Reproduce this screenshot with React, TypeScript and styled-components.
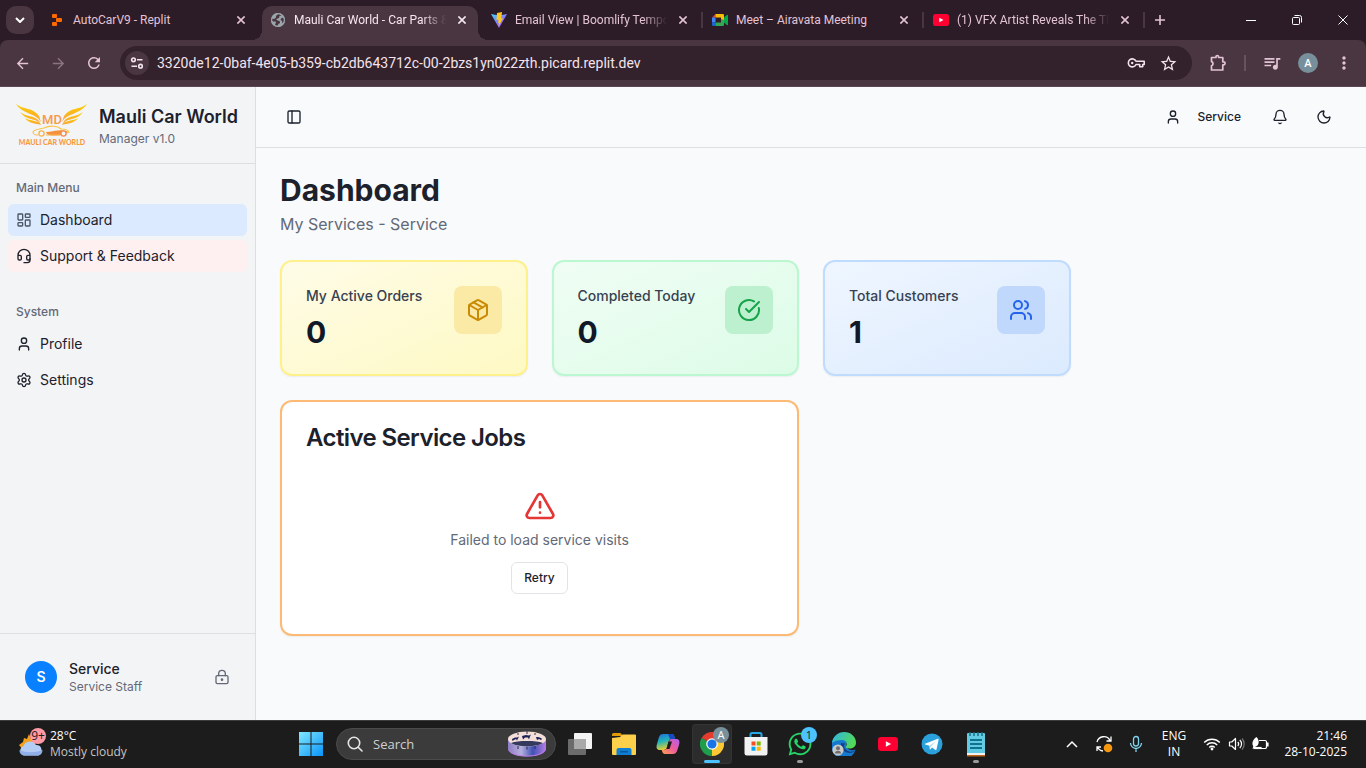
import React from "react";
import styled, { createGlobalStyle, css } from "styled-components";
import {
  Bell,
  CircleCheckBig,
  Headset,
  LayoutDashboard,
  LockKeyhole,
  Moon,
  Package,
  PanelLeft,
  Settings,
  TriangleAlert,
  User,
  Users,
} from "lucide-react";
import {
  MdArrowBack,
  MdArrowForward,
  MdMoreVert,
  MdQueueMusic,
  MdRefresh,
  MdStarBorder,
} from "react-icons/md";
import { FaWhatsapp } from "react-icons/fa";

const strip = "#2c1c27";
const bar = "#4a3640";
const pink = "#e3c3d4";
const ink = "#1c212b";
const muted = "#636976";
const line = "#dddfe3";

const GlobalStyle = createGlobalStyle`
  *, *::before, *::after { box-sizing: border-box; }
  body { margin: 0; font-family: Inter, "Liberation Sans", sans-serif; }
  button { border: 0; padding: 0; background: none; font: inherit; color: inherit; cursor: pointer; }
  input { border: 0; padding: 0; margin: 0; background: none; outline: 0; font: inherit; color: inherit; min-width: 0; }
  h1, h2, p { margin: 0; }
  a { color: inherit; text-decoration: none; }
  svg { display: block; flex: none; }
`;

const Screen = styled.div`
  min-height: 100vh;
  display: flex;
  flex-direction: column;
`;

/* ---------- browser tabs ---------- */

const TabStrip = styled.header`
  height: 40px;
  display: flex;
  align-items: flex-end;
  background: ${strip};
  color: ${pink};
  font-family: Roboto, "Open Sans", sans-serif;
  font-size: 12px;
`;

const TabSearch = styled.button`
  width: 28px;
  height: 28px;
  margin: 0 7px 6px 6px;
  border-radius: 10px;
  background: ${bar};
  color: #fff;
  display: grid;
  place-items: center;
`;

const Tab = styled.div<{ $active?: boolean; $divider?: boolean }>`
  position: relative;
  flex: 0 1 216px;
  min-width: 0;
  height: 34px;
  margin-right: 5px;
  padding: 0 8px 6px 8px;
  display: flex;
  align-items: center;
  gap: 8px;
  ${(p) =>
    p.$active &&
    css`
      background: ${bar};
      color: #f6e6ef;
      border-radius: 10px 10px 0 0;
      &::before,
      &::after {
        content: "";
        position: absolute;
        bottom: 0;
        width: 10px;
        height: 10px;
      }
      &::before {
        left: -10px;
        background: radial-gradient(circle at 0 0, transparent 10px, ${bar} 10px);
      }
      &::after {
        right: -10px;
        background: radial-gradient(circle at 100% 0, transparent 10px, ${bar} 10px);
      }
    `}
  ${(p) =>
    p.$divider &&
    css`
      &::after {
        content: "";
        position: absolute;
        right: -4px;
        top: 6px;
        width: 2px;
        height: 16px;
        background: ${bar};
      }
    `}
`;

const TabTitle = styled.span<{ $fade?: boolean }>`
  flex: 1;
  min-width: 0;
  overflow: hidden;
  white-space: nowrap;
  line-height: 16px;
  ${(p) => p.$fade && css`mask-image: linear-gradient(to right, #000 84%, transparent);`}
`;

const PlainButton = styled.button<{ $w: number }>`
  width: ${(p) => p.$w}px;
  height: 28px;
  display: grid;
  place-items: center;
  flex: none;
`;

const NewTabButton = styled(PlainButton)`
  align-self: center;
`;

const WindowControls = styled.div`
  margin-left: auto;
  align-self: stretch;
  display: flex;
  align-items: center;
  color: #fff;
`;

/* ---------- browser toolbar ---------- */

const ToolbarBack = styled.div`
  background: ${strip};
`;

const Toolbar = styled.div`
  height: 47px;
  display: flex;
  align-items: center;
  padding: 0 4px;
  background: ${bar};
  border-bottom: 1px solid #5b4852;
  border-radius: 8px 8px 0 0;
  color: ${pink};
`;

const Omnibox = styled.label`
  flex: 1;
  height: 34px;
  margin: 0 8px;
  padding: 0 8px 0 5px;
  display: flex;
  align-items: center;
  border-radius: 17px;
  background: #33212c;
  color: #f3e3ec;
`;

const SiteInfo = styled.span`
  width: 24px;
  height: 24px;
  margin-right: 8px;
  border-radius: 50%;
  background: ${bar};
  display: grid;
  place-items: center;
`;

const UrlInput = styled.input`
  flex: 1;
  height: 20px;
  font-family: Roboto, "Open Sans", sans-serif;
  font-size: 14px;
  line-height: 20px;
`;

const ToolDivider = styled.i`
  width: 2px;
  height: 16px;
  margin: 0 8px;
  background: #675360;
`;

const ProfileChip = styled.span`
  width: 20px;
  height: 20px;
  border-radius: 50%;
  display: grid;
  place-items: center;
  background: #78909c;
  color: #fff;
  font-family: Roboto, sans-serif;
  font-size: 11px;
  font-weight: 500;
`;

/* ---------- application ---------- */

const AppShell = styled.div`
  flex: 1;
  display: grid;
  grid-template-columns: 256px 1fr;
  background: #f9fafc;
  color: ${ink};
`;

const Sidebar = styled.aside`
  display: flex;
  flex-direction: column;
  background: #f3f4f6;
  border-right: 1px solid ${line};
`;

const Brand = styled.div`
  height: 77px;
  padding: 0 16px;
  display: flex;
  align-items: center;
  gap: 11px;
  border-bottom: 1px solid ${line};
`;

const BrandName = styled.h2`
  font-size: 18px;
  line-height: 28px;
  font-weight: 600;
  white-space: nowrap;
`;

const Small = styled.p`
  font-size: 12px;
  line-height: 16px;
  color: ${muted};
`;

const Menu = styled.nav`
  flex: 1;
  display: flex;
  flex-direction: column;
  gap: 8px;
`;

const MenuGroup = styled.div`
  padding: 8px;
`;

const MenuLabel = styled.div`
  height: 32px;
  padding: 0 8px;
  display: flex;
  align-items: center;
  font-size: 12px;
  line-height: 16px;
  font-weight: 500;
  color: ${muted};
`;

const MenuList = styled.div`
  display: flex;
  flex-direction: column;
  gap: 4px;
`;

const MenuLink = styled.a<{ $bg?: string }>`
  height: 32px;
  padding: 0 8px;
  display: flex;
  align-items: center;
  gap: 8px;
  border-radius: 6px;
  font-size: 14px;
  line-height: 20px;
  background: ${(p) => p.$bg ?? "transparent"};
`;

const SidebarFooter = styled.div`
  padding: 24px;
  border-top: 1px solid ${line};
`;

const Account = styled.div`
  padding: 1px;
  display: flex;
  align-items: center;
  gap: 12px;
`;

const AccountAvatar = styled.span`
  width: 32px;
  height: 32px;
  border-radius: 50%;
  display: grid;
  place-items: center;
  background: #0880ff;
  color: #fff;
  font-size: 14px;
  line-height: 20px;
  font-weight: 600;
`;

const AccountText = styled.div`
  flex: 1;
`;

const AccountName = styled.p`
  font-size: 14px;
  line-height: 20px;
  font-weight: 500;
`;

const Main = styled.main`
  min-width: 0;
`;

const TopBar = styled.div`
  height: 61px;
  padding: 0 24px;
  display: flex;
  align-items: center;
  gap: 8px;
  border-bottom: 1px solid ${line};
`;

const SquareButton = styled.button<{ $size: number }>`
  width: ${(p) => p.$size}px;
  height: ${(p) => p.$size}px;
  display: grid;
  place-items: center;
`;

const UserButton = styled.button`
  height: 36px;
  margin-left: auto;
  padding: 0 13px;
  display: flex;
  align-items: center;
  gap: 16px;
  font-size: 12px;
  line-height: 16px;
  font-weight: 500;
`;

const Content = styled.div`
  padding: 24px;
`;

const PageTitle = styled.h1`
  font-size: 30px;
  line-height: 36px;
  font-weight: 700;
`;

const PageSubtitle = styled.p`
  margin: 4px 0 24px;
  font-size: 16px;
  line-height: 24px;
  color: ${muted};
`;

const CardGrid = styled.div`
  display: grid;
  grid-template-columns: repeat(4, 1fr);
  gap: 24px;
`;

const StatCard = styled.section<{ $border: string; $from: string; $to: string }>`
  padding: 24px;
  display: flex;
  justify-content: space-between;
  align-items: flex-start;
  border: 2px solid ${(p) => p.$border};
  border-radius: 12px;
  background: linear-gradient(to bottom right, ${(p) => p.$from}, ${(p) => p.$to}) border-box;
  box-shadow: 0 1px 2px rgba(0, 0, 0, 0.06);
`;

const StatLabel = styled.p`
  font-size: 14px;
  line-height: 20px;
  font-weight: 500;
  color: #374151;
`;

const StatValue = styled.p`
  margin-top: 8px;
  font-size: 30px;
  line-height: 36px;
  font-weight: 700;
  color: #111827;
`;

const StatIcon = styled.span<{ $bg: string; $fg: string }>`
  width: 48px;
  height: 48px;
  border-radius: 8px;
  display: grid;
  place-items: center;
  background: ${(p) => p.$bg};
  color: ${(p) => p.$fg};
`;

const JobsCard = styled.section`
  grid-column: span 2;
  padding: 24px;
  border: 2px solid #fdba74;
  border-radius: 12px;
  background: #fff;
  box-shadow: 0 1px 2px rgba(0, 0, 0, 0.06);
`;

const JobsTitle = styled.h2`
  font-size: 24px;
  line-height: 24px;
  font-weight: 600;
  letter-spacing: -0.025em;
`;

const JobsError = styled.div`
  margin-top: 24px;
  padding: 16px 0;
  display: flex;
  flex-direction: column;
  align-items: center;
  color: #e53535;
`;

const JobsMessage = styled.p`
  margin: 8px 0 12px;
  font-size: 14px;
  line-height: 20px;
  color: ${muted};
`;

const RetryButton = styled.button`
  height: 32px;
  padding: 0 12px;
  border: 1px solid #e2e4e7;
  border-radius: 6px;
  font-size: 12px;
  line-height: 16px;
  font-weight: 500;
  color: ${ink};
`;

/* ---------- taskbar ---------- */

const Taskbar = styled.footer`
  height: 48px;
  display: grid;
  grid-template-columns: 289px 1fr auto;
  align-items: center;
  background: #1c1c1c;
  box-shadow: inset 0 1px 0 #3d3d3f;
  color: #fff;
  font-family: "Open Sans", "Noto Sans", sans-serif;
  font-size: 12px;
  line-height: 16px;
`;

const Weather = styled.div`
  padding-left: 16px;
  display: flex;
  align-items: center;
  gap: 4px;
`;

const WeatherNote = styled.div`
  color: #c4c4c4;
`;

const Apps = styled.div`
  display: flex;
  align-items: center;
`;

const AppButton = styled.button<{ $open?: boolean; $focused?: boolean }>`
  position: relative;
  width: 40px;
  height: 40px;
  margin: 0 2px;
  display: grid;
  place-items: center;
  border-radius: 4px;
  ${(p) => p.$focused && css`background: #2c2c2c; box-shadow: inset 0 0 0 1px #343434;`}
  ${(p) =>
    (p.$open || p.$focused) &&
    css`
      &::after {
        content: "";
        position: absolute;
        bottom: 1px;
        width: ${p.$focused ? 16 : 6}px;
        height: 3px;
        border-radius: 2px;
        background: ${p.$focused ? "#4cc2ff" : "#9a9a9a"};
      }
    `}
`;

const AppBadge = styled.span<{ $bg: string; $fg: string }>`
  position: absolute;
  top: 3px;
  right: 3px;
  width: 16px;
  height: 16px;
  border-radius: 50%;
  display: grid;
  place-items: center;
  background: ${(p) => p.$bg};
  color: ${(p) => p.$fg};
  font-size: 11px;
`;

const SearchBox = styled.label`
  width: 220px;
  height: 32px;
  margin: 0 2px 0 3px;
  padding: 0 9px 0 10px;
  display: flex;
  align-items: center;
  gap: 10px;
  border-radius: 16px;
  background: #3b3b3b;
  border: 1px solid #4a4a4a;
`;

const SearchInput = styled.input`
  flex: 1;
  font-size: 13px;
  line-height: 20px;
  &::placeholder {
    color: #d0d0d0;
    opacity: 1;
  }
`;

const Tray = styled.div`
  display: flex;
  align-items: center;
  padding-right: 19px;
`;

const TraySlot = styled.button<{ $w: number }>`
  width: ${(p) => p.$w}px;
  height: 32px;
  display: grid;
  place-items: center;
  text-align: center;
`;

const Clock = styled.div`
  width: 71px;
  display: flex;
  flex-direction: column;
  align-items: flex-end;
  white-space: nowrap;
`;

/* ---------- drawings ---------- */

const Cross = ({ size = 8, w = 2 }: { size?: number; w?: number }) => (
  <svg width={size} height={size} viewBox="0 0 10 10" stroke="currentColor" strokeWidth={w}>
    <path d="M.5.5l9 9M9.5.5l-9 9" />
  </svg>
);

const ReplitMark = () => (
  <svg width="16" height="16" viewBox="0 0 16 16" fill="#ff6a00">
    <rect x="3" y="2" width="5" height="4" rx="1" />
    <rect x="7" y="6" width="6" height="4" rx="1" />
    <rect x="3" y="10" width="5" height="4" rx="1" />
  </svg>
);

const GlobeMark = () => (
  <svg width="16" height="16" viewBox="0 0 16 16">
    <circle cx="8" cy="8" r="7" fill="#9aa5ab" />
    <path d="M8.500 1.500L6 4v1.500L4 7 1.500 6.500 1 8l2 1.500h2.500L6 11l-1 1 .5 2.500h1.500L8.500 12 10 11V9.500L8 8.500 6.500 8V7L9 6l.5-2L12 3.200z" fill={bar} />
    <path d="M11 6.500L13 5.500l1.500 2-.5 3-1.500 1L12 9l-1.500-1z" fill={bar} />
    <circle cx="8" cy="8" r="6.400" fill="none" stroke="#9aa5ab" strokeWidth="1.200" />
  </svg>
);

const ViteMark = () => (
  <svg width="16" height="16" viewBox="0 0 16 16">
    <defs>
      <linearGradient id="vite" x1="0" y1="0" x2="1" y2="1">
        <stop offset="0" stopColor="#41d1ff" />
        <stop offset="1" stopColor="#bd34fe" />
      </linearGradient>
    </defs>
    <path d="M0 2l8 14 8-14-8 1.5z" fill="url(#vite)" />
    <path d="M11 0L6 1l-.5 7 2-.4L7 11l1-.3-.5 4L12 6l-2.200.4.800-3z" fill="#ffc81e" />
  </svg>
);

const MeetMark = () => (
  <svg width="16" height="16" viewBox="0 0 16 16">
    <path d="M0 5.500L3.500 2v3.500z" fill="#ea4335" />
    <path d="M0 5.500h3.500v5H0z" fill="#4285f4" />
    <path d="M0 10.500h3.500V14H1.200A1.200 1.200 0 010 12.800z" fill="#1967d2" />
    <path d="M3.500 2h7.300A1.200 1.200 0 0112 3.200V8L9 7.500v-2H3.500z" fill="#fbbc04" />
    <path d="M3.500 14v-3.500H9V8h3v4.800a1.200 1.200 0 01-1.200 1.200z" fill="#34a853" />
    <path d="M12 5.500L14.800 3c.5-.4 1.200-.1 1.200.5v9c0 .6-.7.900-1.200.5L12 10.500z" fill="#00ac47" />
  </svg>
);

const YoutubeMark = ({ w = 16, h = 12 }: { w?: number; h?: number }) => (
  <svg width={w} height={h} viewBox="0 0 16 12" preserveAspectRatio="none">
    <rect width="16" height="12" rx="2.500" fill="#ff0033" />
    <path d="M6.300 3.700v4.600L10.500 6z" fill="#fff" />
  </svg>
);

const TuneIcon = () => (
  <svg width="14" height="14" viewBox="0 0 14 14" fill="none" stroke="currentColor" strokeWidth="1.600">
    <circle cx="3.500" cy="3.800" r="1.800" />
    <path d="M7 3.800h5.500M1.500 10.200H7" />
    <circle cx="10.500" cy="10.200" r="1.800" />
  </svg>
);

const KeyIcon = () => (
  <svg width="18" height="12" viewBox="0 0 18 12" fill="none" stroke="currentColor" strokeWidth="1.600">
    <path d="M9 4.300h8.200v3.200h-1.500v2.300h-3V7.500H9A4 4 0 119 4.300z" strokeLinejoin="round" />
    <circle cx="5.200" cy="6" r="1.200" fill="currentColor" stroke="none" />
  </svg>
);

const PuzzleIcon = () => (
  <svg width="18" height="18" viewBox="0 0 18 18" fill="none" stroke="currentColor" strokeWidth="1.700" strokeLinejoin="round">
    <path d="M2.500 3.500H7V2.800a1.300 1.300 0 012.600 0v.7h4.200v4.300h.8a1.500 1.500 0 010 3h-.8v5.200H2.500v-4.200a2.200 2.200 0 000-4.200z" />
  </svg>
);

const CarLogo = () => (
  <svg width="72" height="44" viewBox="0 0 72 44" role="img">
    <defs>
      <linearGradient id="gold" x1="0" y1="0" x2="0" y2="1">
        <stop offset="0" stopColor="#fdd000" />
        <stop offset="1" stopColor="#f9a03c" />
      </linearGradient>
    </defs>
    <g fill="url(#gold)">
      <path d="M0 1C7 7 17 4 23 13l2 6C20 10 6 11 0 1z" />
      <path d="M4 9c6 5 14 3 19 9l1 2C19 15 9 17 4 9z" />
      <path d="M9 15c5 3 10 2 15 5l1 2C19 20 13 21 9 15z" />
    </g>
    <g fill="url(#gold)" transform="translate(71 0) scale(-1 1)">
      <path d="M0 1C7 7 17 4 23 13l2 6C20 10 6 11 0 1z" />
      <path d="M4 9c6 5 14 3 19 9l1 2C19 15 9 17 4 9z" />
      <path d="M9 15c5 3 10 2 15 5l1 2C19 20 13 21 9 15z" />
    </g>
    <text x="36" y="21" textAnchor="middle" fontFamily="Roboto, sans-serif" fontWeight="500" fontSize="13" fill="#f79a4a">MD</text>
    <path d="M17 29c1-3 8-3 11-4 6-3 14-2 17 1 4 0 8 1 8 4" fill="none" stroke="#f8c548" strokeWidth="1.200" />
    <path d="M30 29c7 0 13-3 20-1l2 1c-2 3-16 5-21 2z" fill="#f5913d" />
    <path d="M17 29c0 3 3 3 5 3M30 32h14" fill="none" stroke="#f8b54c" />
    <circle cx="25.500" cy="30.500" r="2.600" fill="none" stroke="#f8b54c" strokeWidth="1.400" />
    <circle cx="47.500" cy="30.500" r="2.600" fill="#f3f4f6" stroke="#f28c50" strokeWidth="1.400" />
    <text x="36" y="42" textAnchor="middle" fontFamily="Lato, sans-serif" fontWeight="900" fontSize="7" fill="#f79a3e">MAULI CAR WORLD</text>
  </svg>
);

const WeatherIcon = () => (
  <svg width="30" height="32" viewBox="0 0 30 32">
    <path d="M13 6l2 5 5 3-4 9-9-1-4-5 4-3 1-4 3 1z" fill="#f6a11c" />
    <path d="M8 27.500a5 5 0 01-.5-9.500 7 7 0 0112.500-1 5.400 5.400 0 012 10.500z" fill="#b4cdf5" />
    <path d="M8 27.500a5 5 0 01-4.500-5.500c6 3 16 3 23 0 0 3-2 5.500-4.500 5.500z" fill="#8fb0e8" />
    <circle cx="22" cy="8" r="8" fill="#ff99a4" />
    <text x="22" y="12" textAnchor="middle" fontSize="12" fill="#1c1c1c">9+</text>
  </svg>
);

const StartIcon = () => (
  <svg width="24" height="24" viewBox="0 0 24 24">
    <defs>
      <linearGradient id="start" gradientUnits="userSpaceOnUse" x1="0" y1="0" x2="24" y2="24">
        <stop offset="0" stopColor="#80e8ff" />
        <stop offset="1" stopColor="#0a94f8" />
      </linearGradient>
    </defs>
    <path d="M0 0h11.500v11.500H0zM12.500 0H24v11.500H12.500zM0 12.500h11.500V24H0zM12.500 12.500H24V24H12.500z" fill="url(#start)" />
  </svg>
);

const LensIcon = () => (
  <svg width="16" height="16" viewBox="0 0 16 16" fill="none" stroke="#e6e6e6" strokeWidth="1.600" strokeLinecap="round">
    <circle cx="7" cy="7" r="5.700" />
    <path d="M11.200 11.200L15 15" />
  </svg>
);

const DrumArt = () => (
  <svg width="38" height="26" viewBox="0 0 38 26">
    <defs>
      <linearGradient id="drum" x1="0" y1="0" x2="1" y2="0">
        <stop offset="0" stopColor="#8f7dc4" />
        <stop offset=".35" stopColor="#b5b0dd" />
        <stop offset=".65" stopColor="#3f52b4" />
        <stop offset="1" stopColor="#b77be6" />
      </linearGradient>
    </defs>
    <path d="M0 8v10c0 4 8 7.500 19 7.500S38 22 38 18V8z" fill="url(#drum)" />
    <path d="M1 19c2 4 9 6 18 6s16-2 18-6" fill="none" stroke="#c07be8" />
    <ellipse cx="19" cy="8" rx="19" ry="7.500" fill="#f4dfd8" />
    <path d="M3 12c4-1.500 9-2 16-2s12 .5 16 2c-3 2-9 3.200-16 3.200S6 14 3 12z" fill="#34395e" />
    <g fill="#1d1f57">
      <path d="M14 5l4-1 3 .5 2-1-1 2-1 3-1-2h-3l-2 2z" />
      <path d="M4 8l3-1.500 2 0 2-1-1 2-1 2-1-1.500-2 1-1.500 1z" />
      <path d="M28 6l2 0 3 1 1 1-1 1-2-1-2 1z" />
    </g>
    <path d="M10 2v2M19 0v3M27 2v2M10 15v3M19 15.500v3M27 15v3" stroke="#2b2a52" />
  </svg>
);

const TaskViewIcon = () => (
  <svg width="24" height="24" viewBox="0 0 24 24">
    <rect x="6" y="1" width="18" height="16" rx="1" fill="#f3f3f3" />
    <rect x="0" y="7" width="18" height="16" rx="1" fill="#6b6b6b" />
    <rect x="6" y="7" width="12" height="10" fill="#a9a9a9" />
  </svg>
);

const FolderIcon = () => (
  <svg width="24" height="22" viewBox="0 0 24 22">
    <path d="M0 1.500A1.500 1.500 0 011.500 0h7L11 3H0z" fill="#e09a06" />
    <path d="M0 5l8-1 2.500-2.500H23a1 1 0 011 1V21a1 1 0 01-1 1H1a1 1 0 01-1-1z" fill="#fdd04b" />
    <path d="M4.500 22v-5a2 2 0 012-2h11a2 2 0 012 2v5z" fill="#0f7fd4" />
    <rect x="8" y="18" width="8" height="1.500" rx=".7" fill="#0a579c" />
  </svg>
);

const CopilotIcon = () => (
  <svg width="24" height="24" viewBox="0 0 24 24">
    <defs>
      <linearGradient id="copA" x1="0" y1="0" x2=".3" y2="1">
        <stop offset="0" stopColor="#1d6fe0" />
        <stop offset=".5" stopColor="#22b4b8" />
        <stop offset="1" stopColor="#e8cf2e" />
      </linearGradient>
      <linearGradient id="copB" x1="1" y1="0" x2="0" y2="1">
        <stop offset="0" stopColor="#b060f0" />
        <stop offset=".5" stopColor="#ee5c9c" />
        <stop offset="1" stopColor="#ffa24c" />
      </linearGradient>
    </defs>
    <path d="M7 2h9c1.500 0 2 1 2.500 3l.5 2h-4c-1.500 0-2 1-2.500 3L11 15c-.7 2-1.500 3-3.500 3H4c-3.500 0-4-2.500-3-6l2-7c.8-2 2-3 4-3z" fill="url(#copA)" />
    <path d="M17 22H9c-1.500 0-2.500-1-3-3l-.3-1H8c2 0 2.500-1 3-3L13 9.500C13.500 7.500 14.500 7 16 7h4c3.500 0 4 2.500 3 6l-2 6c-.8 2-2 3-4 3z" fill="url(#copB)" />
    <path d="M12.500 9.500h3.500l-2.500 7.500H10.500z" fill="#1c1c1c" />
    <path d="M12 2h4c1.500 0 2 1 2.500 3l.5 2h-5z" fill="#1848c0" />
  </svg>
);

const ChromeIcon = () => (
  <svg width="24" height="24" viewBox="0 0 24 24">
    <path d="M12 12L1.600 6A12 12 0 0122.400 6z" fill="#e33b2e" />
    <path d="M12 12L22.400 6A12 12 0 0112 24z" fill="#fcc934" />
    <path d="M12 12v12A12 12 0 011.600 6z" fill="#1e9e4c" />
    <path d="M12 6.500h10.600L12 12z" fill="#e33b2e" />
    <path d="M17 14.800L12 24V12z" fill="#fcc934" />
    <circle cx="12" cy="12" r="5.800" fill="#fff" />
    <circle cx="12" cy="12" r="4.600" fill="#1a73e8" />
  </svg>
);

const StoreIcon = () => (
  <svg width="24" height="24" viewBox="0 0 24 24">
    <path d="M6.500 6V2.500A1.500 1.500 0 018 1h8a1.500 1.500 0 011.500 1.500V6" fill="none" stroke="#27a7e8" strokeWidth="2" />
    <path d="M.5 5h23v16a2.500 2.500 0 01-2.500 2.500H3A2.500 2.500 0 01.5 21z" fill="#f2f2f2" />
    <path d="M7.500 9.500h4v4h-4z" fill="#f25022" />
    <path d="M12.700 9.500h4v4h-4z" fill="#7fba00" />
    <path d="M7.500 14.700h4v4h-4z" fill="#00a4ef" />
    <path d="M12.700 14.700h4v4h-4z" fill="#ffb900" />
  </svg>
);

const EdgeIcon = () => (
  <svg width="24" height="24" viewBox="0 0 24 24">
    <defs>
      <linearGradient id="edgeTop" x1="0" y1="0" x2="1" y2=".4">
        <stop offset="0" stopColor="#2fb4ea" />
        <stop offset="1" stopColor="#52d859" />
      </linearGradient>
    </defs>
    <path d="M0 12C0 5 5 2 11 5c5 1 4 6 3 8 1 5 5 6 9.500 4.500A12 12 0 110 12z" fill="#1579cf" />
    <path d="M0 11C1 4 6 0 12 0c7 0 12 5 12 10.500 0 4-3 6-6.500 6-3 0-4-1-3.500-2 2-3 0-6.500-4-6.500C6 8 2 9 0 11z" fill="url(#edgeTop)" />
    <path d="M9 11c-1 6 4 10 9 10 2 0 4-1 5-2.500-3 1.500-5 1.500-7 .5-4-2-5-5-3-7.500z" fill="#123f86" />
    <circle cx="6" cy="18" r="5.600" fill="#c9c9c9" />
    <circle cx="6" cy="16.300" r="2" fill="#6e6e6e" />
    <path d="M2.700 21.500c.5-2 1.800-2.700 3.300-2.700s2.800.7 3.300 2.700z" fill="#6e6e6e" />
  </svg>
);

const TelegramIcon = () => (
  <svg width="22" height="22" viewBox="0 0 22 22">
    <circle cx="11" cy="11" r="10.500" fill="#2aa1dc" />
    <path d="M4 10.800L16.800 5.800c.6-.2 1 .1.800.9l-2.100 9.800c-.2.700-.6.800-1.100.5l-3.300-2.400-1.600 1.600c-.4.400-.8.200-.8-.3l-.2-3.200-4.300-1.300c-.6-.2-.6-.5-.2-.6z" fill="#fff" />
    <path d="M8.700 12.600l6-4.200-4.400 5-.5 2.200z" fill="#b9dcf0" />
  </svg>
);

const NotepadIcon = () => (
  <svg width="20" height="26" viewBox="0 0 20 26">
    <rect x="1" y="2" width="18" height="22" rx="1" fill="#62cbe4" />
    <path d="M4 5V1M8 5V1M12 5V1M16 5V1" stroke="#1d6d86" strokeWidth="1.500" />
    <path d="M4 9h12M4 13h12M4 17h12" stroke="#12718f" strokeWidth="1.800" />
    <path d="M1 22h18v2H1z" fill="#f1f1f1" />
    <path d="M1 24h18v1.500H1z" fill="#c0661c" />
  </svg>
);

const SyncIcon = () => (
  <svg width="18" height="18" viewBox="0 0 18 18" fill="none" stroke="#fff" strokeWidth="1.300">
    <path d="M2 7A7 7 0 0115 5.500M16 1.500v4.500h-4.500M2 16v-4h4M2.500 12A7 7 0 008 16" />
    <circle cx="13" cy="13" r="4.300" fill="#f7960f" stroke="none" />
  </svg>
);

const MicIcon = () => (
  <svg width="14" height="18" viewBox="0 0 14 18" fill="none" stroke="#7fd4ee" strokeWidth="1.300">
    <rect x="4.500" y="1.500" width="5" height="9.500" rx="2.500" />
    <path d="M1.500 8a5.500 5.500 0 0011 0M7 13.500V17" />
  </svg>
);

const WifiIcon = () => (
  <svg width="18" height="14" viewBox="0 0 18 14" fill="none" stroke="#fff" strokeWidth="1.400">
    <path d="M1.200 5.500a11 11 0 0115.600 0M3.800 8a7.300 7.300 0 0110.400 0M6.300 10.400a3.800 3.800 0 015.400 0" />
    <circle cx="9" cy="12" r="1.400" fill="#fff" stroke="none" />
  </svg>
);

const VolumeIcon = () => (
  <svg width="18" height="14" viewBox="0 0 18 14" fill="none" stroke="#fff" strokeWidth="1.200">
    <path d="M1.500 5h2.300L7.500 1.500v11L3.800 9H1.500z" strokeLinejoin="round" />
    <path d="M9.800 5a3 3 0 010 4M11.800 3a5.500 5.500 0 010 8" />
    <path d="M14 1.500a8 8 0 010 11" stroke="#777" />
  </svg>
);

const BatteryIcon = () => (
  <svg width="18" height="14" viewBox="0 0 18 14" fill="none" stroke="#fff" strokeWidth="1.200">
    <path d="M8 3.500h6A1.500 1.500 0 0115.500 5v5a1.500 1.500 0 01-1.500 1.500H3.500" />
    <path d="M15.500 6H17v3h-1.500" fill="#fff" />
    <path d="M3 10.500h7v1H3z" fill="#fff" />
    <path d="M5.500 0C8 2.500 8.500 6 6.500 8.500L4 10 1.500 12l.8-3C.5 7 1.500 2.500 5.500 0z" fill="#fff" stroke="none" />
  </svg>
);

/* ---------- data ---------- */

const tabs = [
  { title: "AutoCarV9 - Replit", icon: <ReplitMark /> },
  { title: "Mauli Car World - Car Parts &", icon: <GlobeMark />, active: true, fade: true },
  { title: "Email View | Boomlify Tempo", icon: <ViteMark />, divider: true, fade: true },
  { title: "Meet – Airavata Meeting", icon: <MeetMark />, divider: true },
  { title: "(1) VFX Artist Reveals The TR", icon: <YoutubeMark />, divider: true, fade: true },
];

const stats = [
  { label: "My Active Orders", value: 0, Icon: Package, border: "#fef08a", from: "#fefce8", to: "#fef9c3", bg: "#fbeaa6", fg: "#ca8a04" },
  { label: "Completed Today", value: 0, Icon: CircleCheckBig, border: "#bbf7d0", from: "#f0fdf4", to: "#dcfce7", bg: "#bdf0cf", fg: "#16a34a" },
  { label: "Total Customers", value: 1, Icon: Users, border: "#bfdbfe", from: "#eff6ff", to: "#dbeafe", bg: "#c0d8fc", fg: "#2563eb" },
];

export default function App() {
  return (
    <Screen>
      <GlobalStyle />
      <TabStrip>
        <TabSearch aria-label="Search tabs">
          <svg width="10" height="6" viewBox="0 0 10 6" fill="none" stroke="currentColor" strokeWidth="2">
            <path d="M1 1l4 4 4-4" />
          </svg>
        </TabSearch>
        {tabs.map((t) => (
          <Tab key={t.title} $active={t.active} $divider={t.divider}>
            {t.icon}
            <TabTitle $fade={t.fade}>{t.title}</TabTitle>
            <PlainButton $w={16} aria-label="Close tab">
              <Cross />
            </PlainButton>
          </Tab>
        ))}
        <NewTabButton $w={28} aria-label="New tab">
          <svg width="10" height="10" viewBox="0 0 10 10" stroke="currentColor" strokeWidth="1.600">
            <path d="M5 0v10M0 5h10" />
          </svg>
        </NewTabButton>
        <WindowControls>
          <PlainButton $w={46} aria-label="Minimize">
            <svg width="10" height="1" viewBox="0 0 10 1"><path d="M0 0h10v1H0z" fill="currentColor" /></svg>
          </PlainButton>
          <PlainButton $w={46} aria-label="Restore">
            <svg width="10" height="10" viewBox="0 0 10 10" fill="none" stroke="currentColor">
              <rect x=".5" y="2.500" width="7" height="7" rx="1" />
              <path d="M2.500.5h5a2 2 0 012 2v5" />
            </svg>
          </PlainButton>
          <PlainButton $w={46} aria-label="Close"><Cross size={10} w={1} /></PlainButton>
        </WindowControls>
      </TabStrip>
      <ToolbarBack>
        <Toolbar>
          <PlainButton $w={36} aria-label="Back"><MdArrowBack size={17} /></PlainButton>
          <PlainButton $w={36} aria-label="Forward"><MdArrowForward size={17} color="#8a7480" /></PlainButton>
          <PlainButton $w={36} aria-label="Reload"><MdRefresh size={18} /></PlainButton>
          <Omnibox>
            <SiteInfo><TuneIcon /></SiteInfo>
            <UrlInput aria-label="Address" defaultValue="3320de12-0baf-4e05-b359-cb2db643712c-00-2bzs1yn022zth.picard.replit.dev" />
            <PlainButton $w={32} aria-label="Passwords"><KeyIcon /></PlainButton>
            <PlainButton $w={32} aria-label="Bookmark"><MdStarBorder size={19} /></PlainButton>
          </Omnibox>
          <PlainButton $w={36} aria-label="Extensions"><PuzzleIcon /></PlainButton>
          <ToolDivider />
          <PlainButton $w={36} aria-label="Media"><MdQueueMusic size={20} /></PlainButton>
          <PlainButton $w={36} aria-label="Profile"><ProfileChip>A</ProfileChip></PlainButton>
          <PlainButton $w={36} aria-label="Menu"><MdMoreVert size={20} /></PlainButton>
        </Toolbar>
      </ToolbarBack>

      <AppShell>
        <Sidebar>
          <Brand>
            <CarLogo />
            <div>
              <BrandName>Mauli Car World</BrandName>
              <Small>Manager v1.0</Small>
            </div>
          </Brand>
          <Menu>
            <MenuGroup>
              <MenuLabel>Main Menu</MenuLabel>
              <MenuList>
                <MenuLink href="#dashboard" $bg="#dbeafe"><LayoutDashboard size={16} color="#4b5563" />Dashboard</MenuLink>
                <MenuLink href="#support" $bg="#fef0f0"><Headset size={16} />Support &amp; Feedback</MenuLink>
              </MenuList>
            </MenuGroup>
            <MenuGroup>
              <MenuLabel>System</MenuLabel>
              <MenuList>
                <MenuLink href="#profile"><User size={16} />Profile</MenuLink>
                <MenuLink href="#settings"><Settings size={16} />Settings</MenuLink>
              </MenuList>
            </MenuGroup>
          </Menu>
          <SidebarFooter>
            <Account>
              <AccountAvatar>S</AccountAvatar>
              <AccountText>
                <AccountName>Service</AccountName>
                <Small>Service Staff</Small>
              </AccountText>
              <button aria-label="Lock"><LockKeyhole size={16} color={muted} /></button>
            </Account>
          </SidebarFooter>
        </Sidebar>

        <Main>
          <TopBar>
            <SquareButton $size={28} aria-label="Toggle sidebar"><PanelLeft size={16} /></SquareButton>
            <UserButton><User size={16} />Service</UserButton>
            <SquareButton $size={36} aria-label="Notifications"><Bell size={16} /></SquareButton>
            <SquareButton $size={36} aria-label="Dark mode"><Moon size={16} /></SquareButton>
          </TopBar>
          <Content>
            <PageTitle>Dashboard</PageTitle>
            <PageSubtitle>My Services - Service</PageSubtitle>
            <CardGrid>
              {stats.map((s) => (
                <StatCard key={s.label} $border={s.border} $from={s.from} $to={s.to}>
                  <div>
                    <StatLabel>{s.label}</StatLabel>
                    <StatValue>{s.value}</StatValue>
                  </div>
                  <StatIcon $bg={s.bg} $fg={s.fg}><s.Icon size={24} /></StatIcon>
                </StatCard>
              ))}
              <JobsCard>
                <JobsTitle>Active Service Jobs</JobsTitle>
                <JobsError>
                  <TriangleAlert size={32} />
                  <JobsMessage>Failed to load service visits</JobsMessage>
                  <RetryButton>Retry</RetryButton>
                </JobsError>
              </JobsCard>
            </CardGrid>
          </Content>
        </Main>
      </AppShell>

      <Taskbar>
        <Weather>
          <WeatherIcon />
          <div>
            <div>28°C</div>
            <WeatherNote>Mostly cloudy</WeatherNote>
          </div>
        </Weather>
        <Apps>
          <AppButton aria-label="Start"><StartIcon /></AppButton>
          <SearchBox>
            <LensIcon />
            <SearchInput aria-label="Search" placeholder="Search" />
            <DrumArt />
          </SearchBox>
          <AppButton aria-label="Task view"><TaskViewIcon /></AppButton>
          <AppButton aria-label="Files"><FolderIcon /></AppButton>
          <AppButton aria-label="Copilot"><CopilotIcon /></AppButton>
          <AppButton $focused aria-label="Chrome"><ChromeIcon /><AppBadge $bg="#78909c" $fg="#fff">A</AppBadge></AppButton>
          <AppButton aria-label="Store"><StoreIcon /></AppButton>
          <AppButton $open aria-label="WhatsApp"><FaWhatsapp size={26} color="#25d366" /><AppBadge $bg="#4cc2ff" $fg="#1c1c1c">1</AppBadge></AppButton>
          <AppButton aria-label="Edge"><EdgeIcon /></AppButton>
          <AppButton aria-label="YouTube"><YoutubeMark w={20} h={14} /></AppButton>
          <AppButton aria-label="Telegram"><TelegramIcon /></AppButton>
          <AppButton $open aria-label="Notepad"><NotepadIcon /></AppButton>
        </Apps>
        <Tray>
          <TraySlot $w={32} aria-label="Hidden icons">
            <svg width="12" height="8" viewBox="0 0 12 8" fill="none" stroke="#fff" strokeWidth="1.500"><path d="M1 7l5-5 5 5" /></svg>
          </TraySlot>
          <TraySlot $w={32} aria-label="Sync"><SyncIcon /></TraySlot>
          <TraySlot $w={32} aria-label="Microphone"><MicIcon /></TraySlot>
          <TraySlot $w={44}>ENG<br />IN</TraySlot>
          <TraySlot $w={32} aria-label="Network"><WifiIcon /></TraySlot>
          <TraySlot $w={16} aria-label="Volume"><VolumeIcon /></TraySlot>
          <TraySlot $w={32} aria-label="Battery"><BatteryIcon /></TraySlot>
          <Clock>
            <span>21:46</span>
            <span>28-10-2025</span>
          </Clock>
        </Tray>
      </Taskbar>
    </Screen>
  );
}
